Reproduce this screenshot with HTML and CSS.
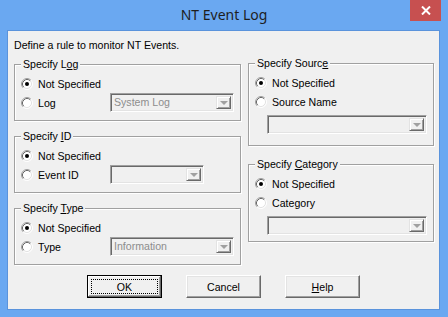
FILE: index.html
```html
<!DOCTYPE html>
<html lang="en">
<head>
    <meta charset="UTF-8">
    <title>NT Event Log</title>
    <link rel="stylesheet" href="styles.css">
</head>
<body>

    <svg class="defs" width="0" height="0">
        <symbol id="radio-off" viewBox="0 0 12 12">
            <circle cx="6" cy="6" r="5" fill="#fff"/>
            <path d="M2.11 9.89 A5.5 5.5 0 0 1 9.89 2.11" fill="none" stroke="#a0a0a0"/>
            <path d="M9.89 2.11 A5.5 5.5 0 0 1 2.11 9.89" fill="none" stroke="#ffffff"/>
            <path d="M2.82 9.18 A4.5 4.5 0 0 1 9.18 2.82" fill="none" stroke="#696969"/>
            <path d="M9.18 2.82 A4.5 4.5 0 0 1 2.82 9.18" fill="none" stroke="#e3e3e3"/>
        </symbol>
        <symbol id="radio-on" viewBox="0 0 12 12">
            <use href="#radio-off"/>
            <circle cx="6" cy="6" r="2" fill="#000"/>
        </symbol>
    </svg>

    <div class="window">
        <header class="titlebar">
            <span class="title">NT Event Log</span>
            <span class="close-btn">
                <svg width="10" height="9" viewBox="0 0 10 9">
                    <path d="M1 0.5 L9 8.5 M9 0.5 L1 8.5" stroke="#fff" stroke-width="2"/>
                </svg>
            </span>
        </header>

        <div class="client">
            <p class="intro">Define a rule to monitor NT Events.</p>

            <div class="columns">
                <div class="col col-left">
                    <div class="group">
                        <span class="legend">Specify L<u>o</u>g</span>
                        <div class="row">
                            <svg class="radio"><use href="#radio-on"/></svg>
                            <span>Not Specified</span>
                        </div>
                        <div class="row">
                            <span class="choice">
                                <svg class="radio"><use href="#radio-off"/></svg>
                                <span>Log</span>
                            </span>
                            <div class="combo combo-wide"><span class="combo-text">System Log</span><span class="combo-btn"></span></div>
                        </div>
                    </div>

                    <div class="group">
                        <span class="legend">Specify <u>I</u>D</span>
                        <div class="row">
                            <svg class="radio"><use href="#radio-on"/></svg>
                            <span>Not Specified</span>
                        </div>
                        <div class="row">
                            <span class="choice">
                                <svg class="radio"><use href="#radio-off"/></svg>
                                <span>Event ID</span>
                            </span>
                            <div class="combo combo-short"><span class="combo-text"></span><span class="combo-btn"></span></div>
                        </div>
                    </div>

                    <div class="group">
                        <span class="legend">Specify <u>T</u>ype</span>
                        <div class="row">
                            <svg class="radio"><use href="#radio-on"/></svg>
                            <span>Not Specified</span>
                        </div>
                        <div class="row">
                            <span class="choice">
                                <svg class="radio"><use href="#radio-off"/></svg>
                                <span>Type</span>
                            </span>
                            <div class="combo combo-wide"><span class="combo-text">Information</span><span class="combo-btn"></span></div>
                        </div>
                    </div>
                </div>

                <div class="col col-right">
                    <div class="group group-source">
                        <span class="legend">Specify Sourc<u>e</u></span>
                        <div class="row">
                            <svg class="radio"><use href="#radio-on"/></svg>
                            <span>Not Specified</span>
                        </div>
                        <div class="row">
                            <svg class="radio"><use href="#radio-off"/></svg>
                            <span>Source Name</span>
                        </div>
                        <div class="combo combo-full"><span class="combo-text"></span><span class="combo-btn"></span></div>
                    </div>

                    <div class="group group-category">
                        <span class="legend">Specify <u>C</u>ategory</span>
                        <div class="row">
                            <svg class="radio"><use href="#radio-on"/></svg>
                            <span>Not Specified</span>
                        </div>
                        <div class="row">
                            <svg class="radio"><use href="#radio-off"/></svg>
                            <span>Category</span>
                        </div>
                        <div class="combo combo-full"><span class="combo-text"></span><span class="combo-btn"></span></div>
                    </div>
                </div>
            </div>

            <div class="buttons">
                <button class="btn btn-default"><span class="focus">OK</span></button>
                <button class="btn">Cancel</button>
                <button class="btn"><u>H</u>elp</button>
            </div>
        </div>
    </div>

</body>
</html>
```

FILE: styles.css
```css
:root {
    --frame-color: #6aa8f1;
    --frame-edge: #5a93dc;
    --close-color: #c75050;
    --face-color: #f0f0f0;
    --light-color: #ffffff;
    --shadow-color: #a0a0a0;
    --dark-shadow: #696969;
    --light-shadow: #e3e3e3;
    --text-color: #000000;
    --disabled-text: #8d8d8d;
}

body {
    margin: 0;
    background-color: var(--frame-color);
    font-family: "Liberation Sans", Arial, sans-serif;
    font-size: 10.6px;
    color: var(--text-color);
}

.defs { position: absolute; }

.window {
    width: 448px;
    height: 317px;
}

/* Title bar */
.titlebar {
    display: grid;
    grid-template-columns: 1fr auto 1fr;
    align-items: start;
    height: 30px;
}
.titlebar .title {
    grid-column: 2;
    font-family: "Noto Sans", sans-serif;
    font-size: 14px;
    line-height: 30px;
    color: #1e1e1e;
}
.close-btn {
    grid-column: 3;
    justify-self: end;
    margin-right: 7px;
    width: 31px;
    height: 21px;
    background-color: var(--close-color);
    display: flex;
    align-items: center;
    justify-content: center;
}

/* Client area */
.client {
    margin-left: 7px;
    width: 433px;
    height: 280px;
    box-sizing: border-box;
    border: 1px solid var(--frame-edge);
    background-color: var(--face-color);
    display: flex;
    flex-direction: column;
}
.intro {
    margin: 7px 0 0 6px;
    line-height: 14px;
}

.columns {
    display: flex;
    gap: 7px;
    margin-left: 6px;
}
.col {
    display: flex;
    flex-direction: column;
}
.col-left { width: 227px; margin-top: 12px; gap: 15px; }
.col-right { width: 186px; margin-top: 11px; gap: 18px; }

/* Group boxes */
.group {
    box-sizing: border-box;
    height: 57px;
    padding: 0 6px;
    border: 1px solid var(--shadow-color);
    box-shadow: inset 1px 1px 0 var(--light-color), 1px 1px 0 var(--light-color);
    display: flex;
    flex-direction: column;
}
.group-source { height: 83px; }
.group-category { height: 78px; }
.legend {
    align-self: flex-start;
    margin: -8px 0 3px 0;
    padding: 0 2px;
    line-height: 14px;
    background-color: var(--face-color);
}
.row {
    display: flex;
    align-items: center;
    height: 19px;
    gap: 5px;
}
.choice {
    display: flex;
    align-items: center;
    gap: 5px;
    width: 84px;
}
.radio {
    width: 12px;
    height: 12px;
    flex-shrink: 0;
}

/* Disabled combo boxes */
.combo {
    box-sizing: border-box;
    height: 19px;
    display: flex;
    align-items: stretch;
    border-top: 1px solid var(--shadow-color);
    border-left: 1px solid var(--shadow-color);
    border-right: 1px solid var(--light-color);
    border-bottom: 1px solid var(--light-color);
    box-shadow: inset 1px 1px 0 var(--dark-shadow), inset -1px -1px 0 var(--light-shadow);
    padding: 2px;
    background-color: var(--face-color);
}
.combo-wide { width: 124px; }
.combo-short { width: 94px; }
.combo-full { width: 160px; margin: 4px 0 0 12px; }
.combo-text {
    flex-grow: 1;
    color: var(--disabled-text);
    line-height: 13px;
    padding-left: 1px;
}
.combo-btn {
    width: 15px;
    box-sizing: border-box;
    border-top: 1px solid var(--light-shadow);
    border-left: 1px solid var(--light-shadow);
    border-right: 1px solid var(--dark-shadow);
    border-bottom: 1px solid var(--dark-shadow);
    box-shadow: inset 1px 1px 0 var(--light-color), inset -1px -1px 0 var(--shadow-color);
    display: flex;
    align-items: center;
    justify-content: center;
}
.combo-btn::after {
    content: "";
    border-left: 4px solid transparent;
    border-right: 4px solid transparent;
    border-top: 4px solid var(--shadow-color);
    margin-top: 1px;
}

/* Buttons */
.buttons {
    display: flex;
    justify-content: center;
    gap: 24px;
    margin-top: 10px;
}
.btn {
    box-sizing: border-box;
    width: 75px;
    height: 23px;
    padding: 0;
    font: inherit;
    color: var(--text-color);
    background-color: var(--face-color);
    border-top: 1px solid var(--light-color);
    border-left: 1px solid var(--light-color);
    border-right: 1px solid var(--dark-shadow);
    border-bottom: 1px solid var(--dark-shadow);
    box-shadow: inset -1px -1px 0 var(--shadow-color), inset 1px 1px 0 var(--light-shadow);
}
.btn-default {
    border: 1px solid #000;
    box-shadow: inset -1px -1px 0 var(--dark-shadow), inset 1px 1px 0 var(--light-color), inset -2px -2px 0 var(--shadow-color);
    display: flex;
    padding: 3px;
}
.btn-default .focus {
    flex-grow: 1;
    display: flex;
    align-items: center;
    justify-content: center;
    outline: 1px dotted #000;
    outline-offset: -1px;
}
```
